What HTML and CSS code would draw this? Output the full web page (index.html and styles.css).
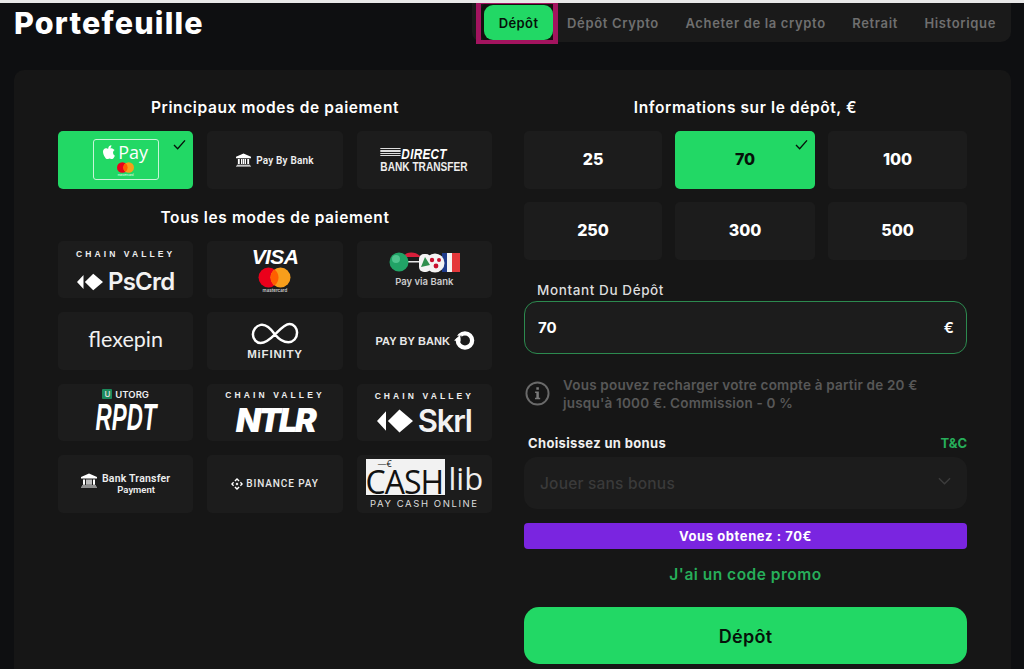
FILE: index.html
```html
<!DOCTYPE html>
<html lang="fr">
<head>
<meta charset="utf-8">
<title>Portefeuille</title>
<link rel="stylesheet" href="styles.css">
</head>
<body>
<svg class="defs" width="0" height="0" aria-hidden="true">
  <defs>
    <symbol id="bank" viewBox="0 0 16 14">
      <path fill="currentColor" d="M8 0 16 3.600V5H0V3.600ZM1 12h14v.8H1ZM0 13.200h16V14H0ZM2 6h2v5.200H2ZM5.300 6h1.400v5.200H5.300ZM7.300 6h1.400v5.200H7.300ZM9.300 6h1.400v5.200H9.300ZM12 6h2v5.200h-2Z"/>
    </symbol>
    <symbol id="diamonds" viewBox="0 0 28 18">
      <path fill="currentColor" d="M0 9 7 1.500V16.500ZM8.500 9 17.500 0 28 9 17.500 18Z"/>
    </symbol>
    <symbol id="check" viewBox="0 0 14 12">
      <path fill="none" stroke="currentColor" stroke-width="1.500" d="M1 6.500 5 10.500 13 1.500"/>
    </symbol>
  </defs>
</svg>
<header class="topbar">
  <h1 class="page-title">Portefeuille</h1>
  <nav class="tabs">
    <a class="tab tab-active">Dépôt</a>
    <a class="tab">Dépôt Crypto</a>
    <a class="tab">Acheter de la crypto</a>
    <a class="tab">Retrait</a>
    <a class="tab">Historique</a>
  </nav>
</header>
<main class="panel">
  <section class="methods">
    <h2 class="section-title">Principaux modes de paiement</h2>
    <div class="method-grid">
      <div class="card card-on">
        <svg class="tick"><use href="#check"/></svg>
        <div class="applepay">
          <div class="ap-row">
            <svg class="apple" viewBox="0 0 14 16"><path fill="#fff" d="M9.800 0c.1 1.200-.4 2.200-1 2.900-.7.800-1.700 1.300-2.700 1.200C6 3 6.500 2 7.100 1.300 7.800.6 8.900.1 9.800 0ZM13.600 5.600c-.2.100-1.900 1.100-1.900 3.200 0 2.400 2.100 3.300 2.200 3.300 0 .1-.4 1.200-1.100 2.300-.7 1-1.400 1.900-2.500 1.900s-1.400-.6-2.600-.6-1.600.6-2.600.7c-1.100 0-1.900-1.100-2.600-2.100C.9 12.300 0 9.300 0 7.600 0 5 1.700 3.600 3.400 3.600c1.100 0 2 .7 2.700.7.600 0 1.700-.8 3-.8.500 0 2.300 0 3.500 1.700Z"/></svg>
            <span class="ap-pay">Pay</span>
          </div>
          <svg class="mc-small" viewBox="0 0 24 15"><circle cx="7.500" cy="7.500" r="7.500" fill="#eb001b"/><circle cx="16.500" cy="7.500" r="7.500" fill="#f79e1b"/><path fill="#ff5f00" d="M12 1.500a7.500 7.500 0 0 1 0 12 7.500 7.500 0 0 1 0-12Z"/></svg>
          <span class="ap-mc">mastercard</span>
        </div>
      </div>
      <div class="card logo-row">
        <svg class="bank-icon"><use href="#bank"/></svg>
        <span class="pbb-text">Pay By Bank</span>
      </div>
      <div class="card">
        <div class="direct">
          <div class="direct-top"><span class="direct-lines"></span><span class="direct-word">DIRECT</span></div>
          <div class="direct-bottom">BANK TRANSFER</div>
        </div>
      </div>
    </div>
    <h2 class="section-title section-second">Tous les modes de paiement</h2>
    <div class="method-grid">
      <div class="card card-stack card-pscrd">
        <div class="chain">CHAIN VALLEY</div>
        <div class="brand-row"><svg class="diamond"><use href="#diamonds"/></svg><span class="brand-big">PsCrd</span></div>
      </div>
      <div class="card card-stack card-visa">
        <div class="visa">VISA</div>
        <svg class="mc-big" viewBox="0 0 33 21"><circle cx="10.500" cy="10.500" r="10" fill="#eb001b"/><circle cx="22.500" cy="10.500" r="10" fill="#f79e1b"/><path fill="#ff5f00" d="M16.500 2.500a10 10 0 0 1 0 16 10 10 0 0 1 0-16Z"/></svg>
        <div class="mc-label">mastercard</div>
      </div>
      <div class="card card-stack">
        <svg class="flags" viewBox="0 0 71 22">
          <rect x="53" y="2" width="5" height="19" fill="#1e3a8a"/><rect x="58" y="2" width="5" height="19" fill="#f4f4f4"/><rect x="63" y="2" width="8" height="19" fill="#e5383b"/>
          <path d="M14 6C17 0 27 0 32 6Z" fill="#d81e3a"/><rect x="18" y="10" width="14" height="1.500" fill="#e8e8e8"/>
          <rect x="30" y="3" width="12" height="18" rx="5" fill="#f4f4f4"/><circle cx="46" cy="12" r="9.500" fill="#f4f4f4"/>
          <path d="M32 16 36 6 41 14Z" fill="#2f8f4e"/><circle cx="43" cy="9" r="2.200" fill="#c8102e"/><circle cx="47" cy="15" r="2.400" fill="#c8102e"/><circle cx="50" cy="9" r="2" fill="#c8102e"/>
          <circle cx="10" cy="11" r="9.500" fill="#21a366"/><circle cx="7" cy="8" r="4" fill="#4fc48e"/>
        </svg>
        <div class="via">Pay via Bank</div>
      </div>
      <div class="card"><span class="flexepin">flexepin</span></div>
      <div class="card card-stack">
        <svg class="infinity" viewBox="0 0 50 26"><path fill="none" stroke="#fff" stroke-width="2.600" d="M25 14C20 7 15 3 10 4 5 5 2 10 2 14c0 5 4 9 8 9 5 0 10-4 15-9C30 9 35 3 40 3c5 0 8 5 8 9 0 6-4 10-9 10-5 0-10-3-14-8"/></svg>
        <div class="mifinity">MiFINITY</div>
      </div>
      <div class="card logo-row logo-pbb">
        <span class="pbb2">PAY BY BANK</span>
        <svg class="ring" viewBox="0 0 22 22"><circle cx="11.500" cy="11" r="7.500" fill="none" stroke="#fff" stroke-width="4.500"/><path fill="#1c1c1c" d="M2 6h6v3H2Z"/><path fill="#fff" d="M0 11 6.500 5 7 12Z"/></svg>
      </div>
      <div class="card card-stack">
        <div class="utorg"><span class="u-badge">U</span>UTORG</div>
        <div class="rpdt">RPDT</div>
      </div>
      <div class="card card-stack card-chain">
        <div class="chain chain-tall">CHAIN VALLEY</div>
        <div class="ntlr">NTLR</div>
      </div>
      <div class="card card-stack card-chain">
        <div class="chain chain-tall">CHAIN VALLEY</div>
        <div class="brand-row brand-skrl"><svg class="diamond diamond-lg"><use href="#diamonds"/></svg><span class="brand-big brand-lg">Skrl</span></div>
      </div>
      <div class="card logo-row">
        <svg class="bank-icon bank-lg"><use href="#bank"/></svg>
        <div class="bt-text"><div class="bt-line">Bank Transfer</div><div class="bt-sub">Payment</div></div>
      </div>
      <div class="card logo-row">
        <svg class="binance" viewBox="0 0 14 14"><path fill="#fff" d="M7 0 10 3 8.900 4.100 7 2.200 5.100 4.100 4 3ZM2.500 4.500 3.600 5.600 2.200 7 3.600 8.400 2.500 9.500 0 7ZM11.500 4.500 14 7 11.500 9.500 10.400 8.400 11.800 7 10.400 5.600ZM7 5.300 8.700 7 7 8.700 5.300 7ZM4 11 5.100 9.900 7 11.800 8.900 9.900 10 11 7 14Z"/></svg>
        <span class="binance-text">BINANCE PAY</span>
      </div>
      <div class="card card-cash">
        <div class="cash-main">
          <div class="cash-box"><div class="cash-euro">—€</div><div class="cash-word">CASH</div></div>
          <span class="cash-lib">lib</span>
        </div>
        <div class="cash-sub">PAY CASH ONLINE</div>
      </div>
    </div>
  </section>

  <section class="deposit">
    <h2 class="section-title">Informations sur le dépôt, €</h2>
    <div class="amount-grid">
      <div class="amount">25</div>
      <div class="amount amount-on"><svg class="tick"><use href="#check"/></svg>70</div>
      <div class="amount">100</div>
      <div class="amount">250</div>
      <div class="amount">300</div>
      <div class="amount">500</div>
    </div>
    <label class="field-label">Montant Du Dépôt</label>
    <div class="field"><span>70</span><span class="field-cur">€</span></div>
    <div class="info">
      <svg class="info-icon" viewBox="0 0 26 26"><circle cx="13" cy="13" r="11.500" fill="none" stroke="#6a6a6a" stroke-width="2"/><rect x="11.800" y="6.500" width="2.600" height="2.600" fill="#7a7a7a"/><path fill="#7a7a7a" d="M10.500 11h3.900v6.500h1.400v1.500h-5.400v-1.500h1.400v-5h-1.300Z"/></svg>
      <p class="info-text">Vous pouvez recharger votre compte à partir de 20 € jusqu'à 1000 €. Commission - 0 %</p>
    </div>
    <div class="bonus-head"><span class="bonus-label">Choisissez un bonus</span><span class="tc">T&amp;C</span></div>
    <div class="select">
      <span>Jouer sans bonus</span>
      <svg class="chev" viewBox="0 0 14 8"><path fill="none" stroke="#3c3c3c" stroke-width="1.500" d="M1 1l6 6 6-6"/></svg>
    </div>
    <div class="gain">Vous obtenez : 70€</div>
    <div class="promo">J'ai un code promo</div>
    <button class="submit">Dépôt</button>
  </section>
</main>
</body>
</html>
```
FILE: styles.css
```css
* { box-sizing: border-box; }
html { height: 669px; overflow: hidden; }
body {
  margin: 0;
  height: 669px;
  background: #0e0f11;
  border-top: 3px solid #e8e8e8;
  color: #fff;
  font-family: Inter, "Noto Sans", sans-serif;
}
.defs { position: absolute; }

.topbar {
  display: flex;
  justify-content: space-between;
  align-items: flex-start;
  height: 67px;
  padding: 0 13px 0 14px;
}
.page-title {
  margin: 0;
  font-size: 30.500px;
  line-height: 40px;
  font-weight: 800;
  letter-spacing: 1.200px;
}
.tabs {
  display: flex;
  align-items: center;
  height: 39px;
  padding: 0 15px 0 12px;
  gap: 26.500px;
  background: #1a1a1a;
  border-radius: 0 0 10px 10px;
}
.tab {
  font-size: 13px;
  font-weight: 600;
  color: #6f6f6f;
  letter-spacing: .65px;
  white-space: nowrap;
}
.tab-active {
  position: relative;
  display: flex;
  align-items: center;
  justify-content: center;
  width: 69px;
  height: 35px;
  margin-right: -12.500px;
  background: #22d865;
  color: #06110a;
  border-radius: 9px;
  letter-spacing: .4px;
  box-shadow: 0 0 0 4px #14100f;
}
.tab-active::after {
  content: "";
  position: absolute;
  top: -5px;
  left: -8px;
  right: -5px;
  bottom: -4px;
  border: solid #a3145f;
  border-width: 4px 5px;
}

.panel {
  display: flex;
  gap: 32px;
  width: 997px;
  height: 599px;
  margin-left: 14px;
  padding: 27px 44px 0;
  background: #161616;
  border-radius: 10px 10px 0 0;
}
.methods { width: 434px; flex: none; }
.deposit { width: 443px; flex: none; }

.section-title {
  margin: 0 0 13px;
  padding-top: 1px;
  font-size: 15.500px;
  line-height: 20px;
  font-weight: 600;
  text-align: center;
  letter-spacing: .6px;
}
.section-second { margin-top: 18px; }

.method-grid {
  display: grid;
  grid-template-columns: repeat(3, 1fr);
  grid-auto-rows: 57.5px;
  gap: 14px;
}
.card {
  position: relative;
  display: flex;
  align-items: center;
  justify-content: center;
  background: #1c1c1c;
  border-radius: 5px;
  overflow: hidden;
  color: #fff;
}
.card-on { background: #22d865; }
.card-stack { flex-direction: column; }
.logo-row { gap: 5px; }
.tick {
  position: absolute;
  top: 8px;
  right: 7px;
  width: 13px;
  height: 11px;
  color: #06110a;
}

.applepay {
  display: flex;
  flex-direction: column;
  align-items: center;
  width: 66px;
  height: 41px;
  border: 1px solid #c8f5d8;
  border-radius: 3px;
}
.ap-row { display: flex; align-items: center; gap: 3px; height: 20px; margin-top: 2px; }
.apple { width: 12px; height: 14px; }
.ap-pay { font-size: 18px; line-height: 20px; color: #fff; font-weight: 400; font-family: "Open Sans", sans-serif; }
.mc-small { width: 17px; height: 11px; }
.ap-mc { font-size: 3px; line-height: 5px; color: #e9fff0; }

.bank-icon { width: 15px; height: 14px; color: #fff; }
.pbb-text { font-size: 10px; font-weight: 600; color: #eee; letter-spacing: .2px; font-family: Roboto, sans-serif; padding-top: 2px; }

.direct {
  display: flex;
  flex-direction: column;
  align-items: flex-start;
  flex: none;
  transform: scaleX(.78);
  font-family: "Liberation Sans", sans-serif;
}
.direct-top { display: flex; align-items: center; gap: 1px; height: 13px; }
.direct-lines {
  width: 26px;
  height: 10px;
  background: repeating-linear-gradient(to bottom, #ddd 0 1px, transparent 1px 2.500px);
}
.direct-word { font-size: 15px; line-height: 13px; font-weight: 700; font-style: italic; letter-spacing: .4px; }
.direct-bottom { font-size: 13px; line-height: 13px; font-weight: 700; color: #eee; white-space: nowrap; }

.chain { font-size: 8.500px; line-height: 10px; font-weight: 700; letter-spacing: 3.100px; color: #eee; font-family: "Liberation Sans", sans-serif; margin-bottom: 10px; }
.card-pscrd { padding-top: 6px; }
.card-chain { padding-top: 2px; }
.chain-tall { margin-bottom: 7px; margin-top: -2px; }
.brand-row { display: flex; align-items: center; gap: 5px; }
.diamond { width: 26px; height: 18px; color: #fff; }
.diamond-lg { width: 36px; height: 24px; }
.brand-big { font-size: 24px; line-height: 26px; font-weight: 600; letter-spacing: -.8px; color: #f2f2f2; font-family: Inter, sans-serif; }
.brand-lg { font-size: 31px; letter-spacing: -1.200px; }

.card-visa { padding-top: 3px; }
.visa { font-size: 21px; line-height: 17px; font-weight: 800; font-style: italic; letter-spacing: -.6px; font-family: "Liberation Sans", sans-serif; }
.mc-big { width: 33px; height: 21px; margin-top: 2px; }
.mc-label { font-size: 4.500px; line-height: 6px; color: #ccc; font-weight: 600; }

.flags { width: 71px; height: 22px; }
.via { font-size: 9.500px; line-height: 13px; font-weight: 600; color: #ccc; font-family: Inter, sans-serif; margin-top: 2px; }

.flexepin { font-size: 21.500px; line-height: 30px; font-weight: 400; color: #f0f0f0; font-family: Lato, sans-serif; margin-top: -4px; }

.infinity { width: 48px; height: 25px; }
.mifinity { font-size: 11.500px; line-height: 12px; font-weight: 800; letter-spacing: .8px; color: #e8e8e8; font-family: "Liberation Sans", sans-serif; margin-top: 2px; }

.logo-pbb { gap: 4px; padding-left: 2px; }
.pbb2 { font-size: 11px; font-weight: 700; color: #e8e8e8; letter-spacing: .1px; font-family: "Liberation Sans", sans-serif; }
.ring { width: 21px; height: 21px; }

.utorg { display: flex; align-items: center; gap: 3px; font-size: 9.500px; line-height: 11px; font-weight: 600; color: #eee; margin-top: -4px; }
.u-badge { display: inline-flex; justify-content: center; width: 10px; height: 10px; background: #1b8a5c; border-radius: 1px; font-size: 8px; line-height: 10px; color: #ddd; }
.rpdt { font-size: 36px; line-height: 28px; font-weight: 700; font-style: italic; color: #fff; font-family: "Liberation Sans", sans-serif; transform: scaleX(.62); margin-top: 4px; }
.ntlr { font-size: 33px; line-height: 27px; font-weight: 900; font-style: italic; letter-spacing: -2.600px; font-family: Inter, sans-serif; }

.bank-lg { width: 16px; height: 15px; margin-top: -6px; }
.bt-text { text-align: center; font-family: Roboto, sans-serif; font-weight: 600; color: #eee; }
.bt-line { font-size: 10.500px; line-height: 11px; letter-spacing: .2px; }
.bt-sub { font-size: 9.500px; line-height: 11px; }

.binance { width: 12px; height: 12px; }
.binance-text { font-size: 10px; font-weight: 500; letter-spacing: .9px; color: #e8e8e8; margin-left: -2px; font-family: Roboto, sans-serif; }

.card-cash { flex-direction: column; justify-content: flex-start; padding-top: 4px; }
.cash-main { display: flex; align-items: flex-end; font-family: "Open Sans", sans-serif; }
.cash-box { width: 79px; height: 37px; background: #f2f2f2; color: #111; border-bottom: 1px solid #111; }
.cash-euro { font-size: 9px; line-height: 10px; padding-left: 12px; }
.cash-word { font-size: 32px; line-height: 26px; letter-spacing: -1px; }
.cash-lib { font-size: 31px; line-height: 36px; font-weight: 400; color: #eee; margin-left: 4px; }
.cash-sub { font-size: 9.500px; line-height: 14px; letter-spacing: 1.600px; color: #ddd; white-space: nowrap; margin-top: 1px; }

.amount-grid {
  display: grid;
  grid-template-columns: 138px 140px 1fr;
  grid-auto-rows: 57.5px;
  gap: 13.500px 13px;
}
.amount {
  position: relative;
  display: flex;
  align-items: center;
  justify-content: center;
  padding-bottom: 2px;
  background: #1c1c1c;
  border-radius: 5px;
  font-size: 16px;
  font-weight: 800;
}
.amount-on { background: #22d865; color: #06110a; }

.field-label { display: block; margin: 20px 0 1px 13px; font-size: 13.500px; line-height: 20px; color: #ddd; font-weight: 500; letter-spacing: .6px; }
.field {
  display: flex;
  justify-content: space-between;
  align-items: center;
  height: 53px;
  padding: 1px 12px 0 13px;
  background: #1c1c1c;
  border: 1px solid #2c8a4f;
  border-radius: 13px;
  font-size: 15px;
  font-weight: 700;
}
.field-cur { font-weight: 600; font-size: 15px; }

.info { display: flex; align-items: center; gap: 13px; margin-top: 22px; padding-left: 1px; }
.info-icon { width: 25px; height: 25px; flex: none; }
.info-text { margin: 0; width: 385px; font-size: 13.500px; line-height: 18px; font-weight: 600; color: #585858; letter-spacing: .2px; }

.bonus-head { display: flex; justify-content: space-between; align-items: center; margin-top: 23px; padding: 0 0 0 4px; line-height: 16px; }
.bonus-label { font-size: 13px; font-weight: 700; color: #f0f0f0; letter-spacing: .35px; }
.tc { font-size: 13px; font-weight: 700; color: #27ae5a; }

.select {
  display: flex;
  justify-content: space-between;
  align-items: center;
  height: 52px;
  margin-top: 6px;
  padding: 1px 16px 0;
  background: #1c1c1c;
  border-radius: 13px;
  font-size: 15.500px;
  font-weight: 500;
  letter-spacing: .2px;
  color: #3a3a3a;
}
.chev { width: 13px; height: 8px; margin-top: -4px; }

.gain {
  display: flex;
  align-items: center;
  justify-content: center;
  height: 26px;
  margin-top: 14px;
  background: #7a25e0;
  border-radius: 4px;
  font-size: 13px;
  font-weight: 700;
  letter-spacing: .6px;
}
.promo { margin-top: 15px; padding-top: 1px; text-align: center; font-size: 15.500px; line-height: 20px; font-weight: 600; color: #27ae5a; letter-spacing: .5px; }
.submit {
  display: block;
  width: 100%;
  height: 57px;
  margin-top: 22px;
  padding-top: 3px;
  border: 0;
  background: #22d865;
  border-radius: 15px;
  color: #06110a;
  font-family: inherit;
  font-size: 18px;
  font-weight: 600;
  letter-spacing: .3px;
}
```
